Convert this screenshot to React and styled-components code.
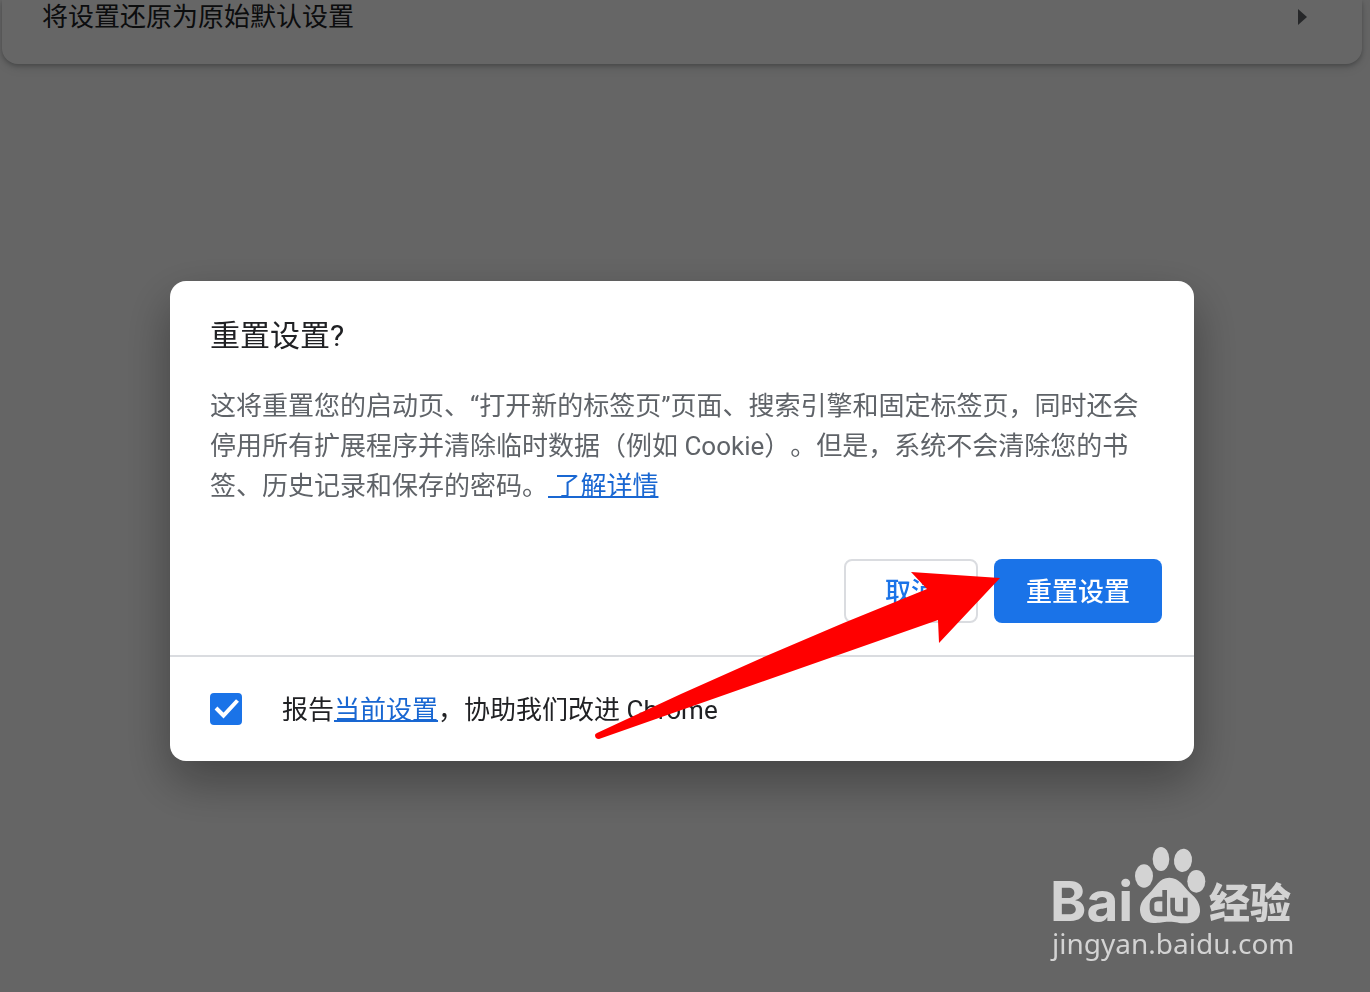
import React, { useState } from 'react';
import styled, { createGlobalStyle } from 'styled-components';

const GlobalStyle = createGlobalStyle`
  * {
    box-sizing: border-box;
  }
  body {
    margin: 0;
    background: #fdfdfd;
    color: #202124;
    font-family: Roboto, 'Noto Sans CJK SC', sans-serif;
    font-size: 26px;
    line-height: 40px;
    text-spacing-trim: space-all;
  }
`;

const App = () => {
  const [report, setReport] = useState(true);

  return (
    <Page lang="zh-CN">
      <GlobalStyle />
      <SettingsCard>
        <SettingsRow type="button">
          <span>将设置还原为原始默认设置</span>
          <svg width="9" height="16" viewBox="0 0 9 16" aria-hidden="true">
            <path d="M0 0L9 8L0 16Z" fill="#5f6368" />
          </svg>
        </SettingsRow>
      </SettingsCard>

      <Overlay>
        <Dialog role="dialog" aria-labelledby="reset-title">
          <DialogBody>
            <Title id="reset-title">重置设置?</Title>
            <Description>
              这将重置您的启动页、“打开新的标签页”页面、搜索引擎和固定标签页，同时还会停用所有扩展程序并清除临时数据（例如 Cookie）。但是，系统不会清除您的书签、历史记录和保存的密码。<Link href="#learn-more"> 了解详情</Link>
            </Description>
          </DialogBody>
          <Actions>
            <Button type="button">取消</Button>
            <Button type="button" $primary>重置设置</Button>
          </Actions>
          <Footer>
            <CheckWrap>
              <Checkbox
                id="report"
                type="checkbox"
                checked={report}
                onChange={(e) => setReport(e.target.checked)}
              />
              {report && (
                <CheckMark viewBox="0 0 32 32" aria-hidden="true">
                  <path d="M6 15L13.5 22.5L27.5 7.5" fill="none" stroke="#fff" strokeWidth="4" />
                </CheckMark>
              )}
            </CheckWrap>
            <label htmlFor="report">
              报告<Link href="#current">当前设置</Link>，协助我们改进 Chrome
            </label>
          </Footer>

          {/* Pointer to the reset button */}
          <Arrow viewBox="0 0 406 172" aria-hidden="true">
            <path
              d="M2 162Q166 84 332 18L316 1L405 7L344 72L343 49L4 168Q0 168 0 164Q0 163 2 162Z"
              fill="#f00"
            />
          </Arrow>
        </Dialog>
      </Overlay>

      <Watermark viewBox="0 0 300 150" role="img" aria-label="Baidu 经验">
        <LogoText x="20" y="91">Bai</LogoText>
        <g transform="scale(0.3333)">
          <ellipse cx="342" cy="138" rx="27" ry="35" />
          <ellipse cx="393" cy="87" rx="25" ry="36" />
          <ellipse cx="459" cy="91" rx="27" ry="35" transform="rotate(6 459 91)" />
          <ellipse cx="499" cy="154" rx="27" ry="34" />
          <path d="M418 143C448 143 462 171 480 188C500 205 512 222 510 246C507 271 488 280 465 280C447 280 439 275 418 275C396 275 390 279 371 279C345 279 331 263 330 240C330 218 342 206 358 190C377 171 388 143 418 143Z" />
          <g fill="none" stroke="#666" strokeWidth="14">
            <path d="M404 180V252H384Q366 252 366 238V222Q366 207 384 207H404" />
            <path d="M428 203V238Q428 252 442 252H466V203" />
          </g>
        </g>
        <LogoText x="179" y="88" $cjk>经验</LogoText>
        <SiteText x="22" y="124">jingyan.baidu.com</SiteText>
      </Watermark>
    </Page>
  );
};

const Page = styled.div`
  min-height: 100vh;
  padding: 0 8px 0 2px;
`;

const SettingsCard = styled.section`
  background: #fff;
  border-radius: 0 0 16px 16px;
  box-shadow: 0 2px 4px rgba(60, 64, 67, 0.3), 0 4px 12px rgba(60, 64, 67, 0.15);
`;

const SettingsRow = styled.button`
  display: flex;
  align-items: center;
  justify-content: space-between;
  width: 100%;
  padding: 0 55px 30px 40px;
  border: 0;
  background: none;
  color: inherit;
  font: inherit;
  line-height: 34px;
  cursor: pointer;
`;

const Overlay = styled.div`
  position: fixed;
  inset: 0;
  display: flex;
  align-items: center;
  justify-content: center;
  padding: 50px 6px 0 0;
  background: rgba(0, 0, 0, 0.6);
`;

const Dialog = styled.div`
  position: relative;
  width: 80%;
  min-width: 640px;
  max-width: 1024px;
  background: #fff;
  border-radius: 16px;
  box-shadow: 0 20px 48px rgba(0, 0, 0, 0.35);
`;

const DialogBody = styled.div`
  padding: 35px 40px 53px;
`;

const Title = styled.h1`
  margin: 0 0 30px;
  font-size: 30px;
  font-weight: 400;
  line-height: 40px;
`;

const Description = styled.p`
  margin: 0;
  color: #5f6368;
`;

const Link = styled.a`
  color: #1967d2;
  text-decoration: underline;
  text-decoration-thickness: 2px;
`;

const Actions = styled.div`
  display: flex;
  justify-content: flex-end;
  gap: 16px;
  padding: 0 32px 32px;
`;

const Button = styled.button`
  height: 64px;
  padding: 2px ${(props) => (props.$primary ? '32px' : '39px')} 0;
  border: ${(props) => (props.$primary ? '0' : '2px solid #dadce0')};
  border-radius: 8px;
  background: ${(props) => (props.$primary ? '#1a73e8' : '#fff')};
  color: ${(props) => (props.$primary ? '#fff' : '#1a73e8')};
  font: inherit;
  font-weight: 500;
  cursor: pointer;
`;

const Footer = styled.div`
  display: flex;
  align-items: center;
  gap: 40px;
  padding: 32px 40px;
  border-top: 2px solid #dadce0;

  label {
    padding-top: 2px;
    line-height: 38px;
  }
`;

const CheckWrap = styled.span`
  position: relative;
  display: flex;
`;

const Checkbox = styled.input`
  appearance: none;
  width: 32px;
  height: 32px;
  margin: 0;
  border: 4px solid #5f6368;
  border-radius: 4px;
  cursor: pointer;

  &:checked {
    border-color: #1a73e8;
    background: #1a73e8;
  }
`;

const CheckMark = styled.svg`
  position: absolute;
  inset: 0;
  pointer-events: none;
`;

const Arrow = styled.svg`
  position: absolute;
  right: 193px;
  bottom: 18px;
  width: 406px;
  height: 172px;
  pointer-events: none;
`;

const Watermark = styled.svg`
  position: fixed;
  right: 40px;
  bottom: 12px;
  width: 300px;
  height: 150px;
  fill: #d3d3d3;
  pointer-events: none;
`;

const LogoText = styled.text`
  font-family: ${(props) => (props.$cjk ? "'Noto Sans CJK SC'" : 'Inter')}, sans-serif;
  font-size: ${(props) => (props.$cjk ? '41px' : '55px')};
  font-weight: ${(props) => (props.$cjk ? 900 : 700)};
`;

const SiteText = styled.text`
  font-family: 'Noto Sans', sans-serif;
  font-size: 28px;
  font-weight: 400;
`;

export default App;
